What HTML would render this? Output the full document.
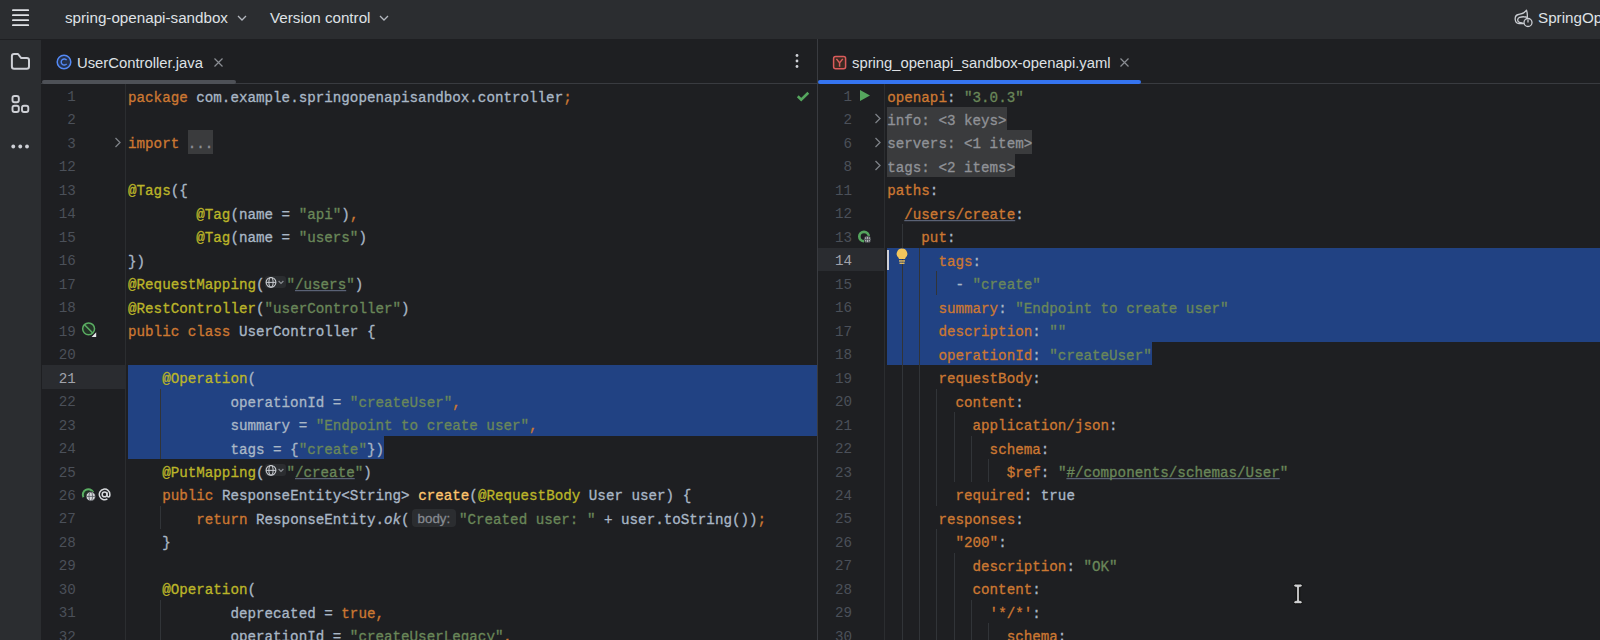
<!DOCTYPE html>
<html><head><meta charset="utf-8">
<style>
*{margin:0;padding:0;box-sizing:border-box}
html,body{width:1600px;height:640px;overflow:hidden;background:#1e1f22;position:relative}
body{font-family:"Liberation Sans",sans-serif}
.abs{position:absolute}
#title{position:absolute;left:0;top:0;width:1600px;height:39px;background:#2b2d30}
#strip{position:absolute;left:0;top:40px;width:41px;height:600px;background:#2b2d30}
.ttext{position:absolute;top:8.1px;font-size:15.2px;line-height:20px;color:#dfe1e5;white-space:nowrap}
.tabtext{position:absolute;top:52.6px;font-size:14.82px;line-height:20px;color:#dfe1e5;white-space:nowrap}
.hline{position:absolute;height:1px;background:#393b40}
.vline{position:absolute;width:1px;background:#393b40}
.ln{position:absolute;height:23.47px;line-height:23.5px;font-family:"Liberation Mono",monospace;font-size:14.233px;color:#4b5059;text-align:right;padding-top:2.5px}
.l-ln{left:41px;width:34.8px}
.r-ln{left:818px;width:34px}
.ln.cur{color:#a1a3ab}
.code{position:absolute;height:23.47px;line-height:23.5px;font-family:"Liberation Mono",monospace;font-size:14.233px;white-space:pre;padding-top:2.5px;-webkit-text-stroke:0.3px currentColor;transform:scaleY(1.07);transform-origin:0 17.2px}
.l-code{left:128px}
.r-code{left:887.2px}
.d{color:#a9b7c6}
.k{color:#cc7832}
.ku{color:#cc7832;text-decoration:underline;text-decoration-color:#646d82;text-underline-offset:1.4px;text-decoration-thickness:1.4px;text-decoration-skip-ink:none}
.s{color:#6a8759}
.su{color:#6a8759;text-decoration:underline;text-decoration-color:#646d82;text-underline-offset:1.4px;text-decoration-thickness:1.4px;text-decoration-skip-ink:none}
.a{color:#bbb529}
.m{color:#ffc66d}
.i{color:#a9b7c6;font-style:italic}
.fold{display:inline-block;vertical-align:top;position:relative;top:-2.5px;height:23.5px;padding-top:2.5px;color:#8c8f94;background:#3a3b3d;transform:scaleY(0.93458);transform-origin:0 17.2px}
.fold2{color:#909297}
.inlay-globe{display:inline-block;width:21.9px;height:12px;vertical-align:top;position:relative;top:2.9px;background:#2b2d30;border-radius:3px;transform:scaleY(0.93458);transform-origin:0 11.8px}
.inlay-globe svg{display:block}
.inlay-body{display:inline-block;width:43.9px;height:18.3px;margin:0 3.1px 0 2.3px;vertical-align:top;font-family:"Liberation Sans",sans-serif;font-size:13.3px;line-height:19.6px;color:#868a91;background:#2b2d30;border-radius:4px;text-indent:5.7px;transform:scaleY(0.93458);transform-origin:0 14.7px}
.guide{position:absolute;width:1px;background:#313438}
.sel{position:absolute;background:#214283}
.curgut{position:absolute;background:#2a2c30}
.foldbg{position:absolute;background:#3a3b3d}
</style></head><body>
<div id="title"></div>
<!-- hamburger -->
<svg class="abs" style="left:11px;top:9px" width="19" height="18" viewBox="0 0 19 18">
<g stroke="#dfe1e5" stroke-width="1.8" stroke-linecap="round"><line x1="1.9" y1="1.2" x2="17.2" y2="1.2"/><line x1="1.9" y1="6.2" x2="17.2" y2="6.2"/><line x1="1.9" y1="11.2" x2="17.2" y2="11.2"/><line x1="1.9" y1="16.2" x2="17.2" y2="16.2"/></g></svg>
<div class="ttext" style="left:65px">spring-openapi-sandbox</div>
<svg class="abs" style="left:237px;top:14.5px" width="10" height="7" viewBox="0 0 10 7"><path d="M1 1 L5 5 L9 1" fill="none" stroke="#b4b8bf" stroke-width="1.3"/></svg>
<div class="ttext" style="left:270px">Version control</div>
<svg class="abs" style="left:379px;top:14.5px" width="10" height="7" viewBox="0 0 10 7"><path d="M1 1 L5 5 L9 1" fill="none" stroke="#b4b8bf" stroke-width="1.3"/></svg>
<!-- spring icon -->
<svg class="abs" style="left:1514px;top:9px" width="20" height="19" viewBox="0 0 20 19">
<path d="M12.5 1.2 C10.5 4.5 7 5 4.5 5.5 C2 6 1 8 1.2 10.5 C1.5 13 3 14.5 5 14.6 L9.5 14.5 C8 13.8 5 13.6 4.3 12.6 C3.3 11.3 3.6 9 5.5 8.3 C8 7.6 11.5 7.8 13.3 8.5 C13.5 6 13.3 3.5 12.5 1.2 Z" fill="none" stroke="#c9ccd1" stroke-width="1.3" stroke-linejoin="round"/>
<circle cx="14" cy="13.5" r="4" fill="#2b2d30" stroke="#c9ccd1" stroke-width="1.3"/><line x1="14" y1="10.5" x2="14" y2="13.5" stroke="#c9ccd1" stroke-width="1.3"/></svg>
<div class="ttext" style="left:1538px">SpringOpenApiSandbox</div>

<div id="strip"></div>
<!-- folder icon -->
<svg class="abs" style="left:10px;top:52px" width="22" height="19" viewBox="0 0 22 19">
<path d="M1.9 4.2 Q1.9 2 4.1 2 L8 2 L11 5.9 L16.8 5.9 Q19 5.9 19 8.1 L19 14.6 Q19 16.8 16.8 16.8 L4.1 16.8 Q1.9 16.8 1.9 14.6 Z" fill="none" stroke="#ced0d6" stroke-width="2" stroke-linejoin="round"/></svg>
<!-- structure icon -->
<svg class="abs" style="left:10px;top:94px" width="22" height="20" viewBox="0 0 22 20">
<g fill="none" stroke="#ced0d6" stroke-width="1.9"><rect x="2.5" y="2" width="6.3" height="6.3" rx="2"/><rect x="2.5" y="11.7" width="6.3" height="6.3" rx="2"/><rect x="12" y="11.7" width="6.3" height="6.3" rx="2"/></g></svg>
<!-- more icon -->
<svg class="abs" style="left:10px;top:143px" width="22" height="7" viewBox="0 0 22 7">
<g fill="#ced0d6"><circle cx="3.25" cy="3.5" r="1.9"/><circle cx="10.25" cy="3.5" r="1.9"/><circle cx="17" cy="3.5" r="1.9"/></g></svg>

<!-- tab bars -->
<div class="hline" style="left:41px;top:83px;width:1559px"></div>
<div class="vline" style="left:817px;top:39px;height:601px"></div>
<!-- left tab -->
<svg class="abs" style="left:56px;top:54px" width="16" height="16" viewBox="0 0 16 16">
<circle cx="8" cy="8" r="6.8" fill="#25324d" stroke="#548af7" stroke-width="1.5"/>
<path d="M10.6 6.2 A3 3 0 1 0 10.6 9.8" fill="none" stroke="#548af7" stroke-width="1.4"/></svg>
<div class="tabtext" style="left:77px">UserController.java</div>
<svg class="abs" style="left:213px;top:57px" width="11" height="11" viewBox="0 0 11 11"><path d="M1.5 1.5 L9.5 9.5 M9.5 1.5 L1.5 9.5" stroke="#8a8d93" stroke-width="1.2"/></svg>
<div class="abs" style="left:42px;top:80px;width:194px;height:4px;background:#4e5157;border-radius:2px"></div>
<svg class="abs" style="left:793.8px;top:53.2px" width="6" height="16" viewBox="0 0 6 16"><g fill="#ced0d6"><circle cx="3" cy="2.5" r="1.4"/><circle cx="3" cy="8" r="1.4"/><circle cx="3" cy="13.5" r="1.4"/></g></svg>
<!-- right tab -->
<svg class="abs" style="left:832px;top:55px" width="15" height="15" viewBox="0 0 15 15">
<rect x="1.6" y="1.6" width="12" height="12.2" rx="2" fill="#3a2a22" stroke="#db5c5c" stroke-width="1.5"/>
<path d="M4.4 3.9 L7.6 7.9 L10.8 3.9 M7.6 7.9 L7.6 11.7" fill="none" stroke="#db5c5c" stroke-width="1.5"/></svg>
<div class="tabtext" style="left:852px">spring_openapi_sandbox-openapi.yaml</div>
<svg class="abs" style="left:1119px;top:57.3px" width="11" height="11" viewBox="0 0 11 11"><path d="M1.5 1.5 L9.5 9.5 M9.5 1.5 L1.5 9.5" stroke="#8a8d93" stroke-width="1.2"/></svg>
<div class="abs" style="left:818px;top:80px;width:323px;height:4px;background:#3574f0;border-radius:2px"></div>

<!-- gutter separators -->
<div class="vline" style="left:125px;top:84px;height:556px;background:#2b2d30"></div>
<div class="vline" style="left:884px;top:84px;height:556px;background:#2b2d30"></div>

<!-- left current line + selection -->
<div class="curgut" style="left:42px;top:365.14px;width:83px;height:23.47px"></div>
<div class="sel" style="left:128px;top:365.14px;width:689px;height:70.41px"></div>
<div class="sel" style="left:128px;top:435.55px;width:256.2px;height:23.47px"></div>
<!-- right current line + selection -->
<div class="curgut" style="left:818px;top:247.79px;width:66px;height:23.47px"></div>
<div class="sel" style="left:887.2px;top:247.79px;width:712.8px;height:93.88px"></div>
<div class="sel" style="left:887.2px;top:341.67px;width:264.8px;height:23.47px"></div>
<!-- folded bgs -->
<div class="foldbg" style="left:887.2px;top:106.97px;width:119.6px;height:23.47px"></div>
<div class="foldbg" style="left:887.2px;top:130.44px;width:145.2px;height:23.47px"></div>
<div class="foldbg" style="left:887.2px;top:153.91px;width:128.1px;height:23.47px"></div>

<div class="guide" style="left:160.2px;top:388.61px;height:70.41px"></div>
<div class="guide" style="left:160.2px;top:505.96px;height:23.47px"></div>
<div class="guide" style="left:160.2px;top:599.84px;height:46.94px"></div>
<div class="guide" style="left:902.3px;top:224.32px;height:422.46px"></div>
<div class="guide" style="left:919.4px;top:247.79px;height:398.99px"></div>
<div class="guide" style="left:936.4px;top:271.26px;height:23.47px"></div>
<div class="guide" style="left:936.4px;top:388.61px;height:117.35px"></div>
<div class="guide" style="left:953.5px;top:412.08px;height:70.41px"></div>
<div class="guide" style="left:970.6px;top:435.55px;height:46.94px"></div>
<div class="guide" style="left:987.7px;top:459.02px;height:23.47px"></div>
<div class="guide" style="left:936.4px;top:529.43px;height:117.35px"></div>
<div class="guide" style="left:953.5px;top:552.90px;height:93.88px"></div>
<div class="guide" style="left:970.6px;top:599.84px;height:46.94px"></div>
<div class="guide" style="left:987.7px;top:623.31px;height:23.47px"></div>
<div class="ln l-ln" style="top:83.50px">1</div>
<div class="code l-code" style="top:83.50px"><span class="k">package</span><span class="d"> com.example.springopenapisandbox.controller</span><span class="k">;</span></div>
<div class="ln l-ln" style="top:106.97px">2</div>
<div class="code l-code" style="top:106.97px"></div>
<div class="ln l-ln" style="top:130.44px">3</div>
<div class="code l-code" style="top:130.44px"><span class="k">import</span><span class="d"> </span><span class="fold">...</span></div>
<div class="ln l-ln" style="top:153.91px">12</div>
<div class="code l-code" style="top:153.91px"></div>
<div class="ln l-ln" style="top:177.38px">13</div>
<div class="code l-code" style="top:177.38px"><span class="a">@Tags</span><span class="d">({</span></div>
<div class="ln l-ln" style="top:200.85px">14</div>
<div class="code l-code" style="top:200.85px"><span class="d">        </span><span class="a">@Tag</span><span class="d">(name = </span><span class="s">"api"</span><span class="d">)</span><span class="k">,</span></div>
<div class="ln l-ln" style="top:224.32px">15</div>
<div class="code l-code" style="top:224.32px"><span class="d">        </span><span class="a">@Tag</span><span class="d">(name = </span><span class="s">"users"</span><span class="d">)</span></div>
<div class="ln l-ln" style="top:247.79px">16</div>
<div class="code l-code" style="top:247.79px"><span class="d">})</span></div>
<div class="ln l-ln" style="top:271.26px">17</div>
<div class="code l-code" style="top:271.26px"><span class="a">@RequestMapping</span><span class="d">(</span><span class="inlay-globe"><svg width="21" height="12" viewBox="0 0 21 12"><circle cx="6" cy="6.4" r="4.9" fill="none" stroke="#c9ccd1" stroke-width="1.1"/><ellipse cx="6" cy="6.4" rx="2.1" ry="4.9" fill="none" stroke="#c9ccd1" stroke-width="1"/><line x1="1.1" y1="6.4" x2="10.9" y2="6.4" stroke="#c9ccd1" stroke-width="1"/><path d="M13.6 5 L16 7.4 L18.4 5" fill="none" stroke="#8a8d93" stroke-width="1.2"/></svg></span><span class="s">"</span><span class="su">/users</span><span class="s">"</span><span class="d">)</span></div>
<div class="ln l-ln" style="top:294.73px">18</div>
<div class="code l-code" style="top:294.73px"><span class="a">@RestController</span><span class="d">(</span><span class="s">"userController"</span><span class="d">)</span></div>
<div class="ln l-ln" style="top:318.20px">19</div>
<div class="code l-code" style="top:318.20px"><span class="k">public class</span><span class="d"> UserController {</span></div>
<div class="ln l-ln" style="top:341.67px">20</div>
<div class="code l-code" style="top:341.67px"></div>
<div class="ln l-ln cur" style="top:365.14px">21</div>
<div class="code l-code" style="top:365.14px"><span class="d">    </span><span class="a">@Operation</span><span class="d">(</span></div>
<div class="ln l-ln" style="top:388.61px">22</div>
<div class="code l-code" style="top:388.61px"><span class="d">            operationId = </span><span class="s">"createUser"</span><span class="k">,</span></div>
<div class="ln l-ln" style="top:412.08px">23</div>
<div class="code l-code" style="top:412.08px"><span class="d">            summary = </span><span class="s">"Endpoint to create user"</span><span class="k">,</span></div>
<div class="ln l-ln" style="top:435.55px">24</div>
<div class="code l-code" style="top:435.55px"><span class="d">            tags = {</span><span class="s">"create"</span><span class="d">})</span></div>
<div class="ln l-ln" style="top:459.02px">25</div>
<div class="code l-code" style="top:459.02px"><span class="d">    </span><span class="a">@PutMapping</span><span class="d">(</span><span class="inlay-globe"><svg width="21" height="12" viewBox="0 0 21 12"><circle cx="6" cy="6.4" r="4.9" fill="none" stroke="#c9ccd1" stroke-width="1.1"/><ellipse cx="6" cy="6.4" rx="2.1" ry="4.9" fill="none" stroke="#c9ccd1" stroke-width="1"/><line x1="1.1" y1="6.4" x2="10.9" y2="6.4" stroke="#c9ccd1" stroke-width="1"/><path d="M13.6 5 L16 7.4 L18.4 5" fill="none" stroke="#8a8d93" stroke-width="1.2"/></svg></span><span class="s">"</span><span class="su">/create</span><span class="s">"</span><span class="d">)</span></div>
<div class="ln l-ln" style="top:482.49px">26</div>
<div class="code l-code" style="top:482.49px"><span class="d">    </span><span class="k">public</span><span class="d"> ResponseEntity&lt;String&gt; </span><span class="m">create</span><span class="d">(</span><span class="a">@RequestBody</span><span class="d"> User user) {</span></div>
<div class="ln l-ln" style="top:505.96px">27</div>
<div class="code l-code" style="top:505.96px"><span class="d">        </span><span class="k">return</span><span class="d"> ResponseEntity.</span><span class="i">ok</span><span class="d">(</span><span class="inlay-body">body:</span><span class="s">"Created user: "</span><span class="d"> + user.toString())</span><span class="k">;</span></div>
<div class="ln l-ln" style="top:529.43px">28</div>
<div class="code l-code" style="top:529.43px"><span class="d">    }</span></div>
<div class="ln l-ln" style="top:552.90px">29</div>
<div class="code l-code" style="top:552.90px"></div>
<div class="ln l-ln" style="top:576.37px">30</div>
<div class="code l-code" style="top:576.37px"><span class="d">    </span><span class="a">@Operation</span><span class="d">(</span></div>
<div class="ln l-ln" style="top:599.84px">31</div>
<div class="code l-code" style="top:599.84px"><span class="d">            deprecated = </span><span class="k">true</span><span class="k">,</span></div>
<div class="ln l-ln" style="top:623.31px">32</div>
<div class="code l-code" style="top:623.31px"><span class="d">            operationId = </span><span class="s">"createUserLegacy"</span><span class="k">,</span></div>
<div class="ln r-ln" style="top:83.50px">1</div>
<div class="code r-code" style="top:83.50px"><span class="k">openapi</span><span class="d">:</span><span class="d"> </span><span class="s">"3.0.3"</span></div>
<div class="ln r-ln" style="top:106.97px">2</div>
<div class="code r-code" style="top:106.97px"><span class="fold2">info: &lt;3 keys&gt;</span></div>
<div class="ln r-ln" style="top:130.44px">6</div>
<div class="code r-code" style="top:130.44px"><span class="fold2">servers: &lt;1 item&gt;</span></div>
<div class="ln r-ln" style="top:153.91px">8</div>
<div class="code r-code" style="top:153.91px"><span class="fold2">tags: &lt;2 items&gt;</span></div>
<div class="ln r-ln" style="top:177.38px">11</div>
<div class="code r-code" style="top:177.38px"><span class="k">paths</span><span class="d">:</span></div>
<div class="ln r-ln" style="top:200.85px">12</div>
<div class="code r-code" style="top:200.85px"><span class="d">  </span><span class="ku">/users/create</span><span class="d">:</span></div>
<div class="ln r-ln" style="top:224.32px">13</div>
<div class="code r-code" style="top:224.32px"><span class="d">    </span><span class="k">put</span><span class="d">:</span></div>
<div class="ln r-ln cur" style="top:247.79px">14</div>
<div class="code r-code" style="top:247.79px"><span class="d">      </span><span class="k">tags</span><span class="d">:</span></div>
<div class="ln r-ln" style="top:271.26px">15</div>
<div class="code r-code" style="top:271.26px"><span class="d">        - </span><span class="s">"create"</span></div>
<div class="ln r-ln" style="top:294.73px">16</div>
<div class="code r-code" style="top:294.73px"><span class="d">      </span><span class="k">summary</span><span class="d">: </span><span class="s">"Endpoint to create user"</span></div>
<div class="ln r-ln" style="top:318.20px">17</div>
<div class="code r-code" style="top:318.20px"><span class="d">      </span><span class="k">description</span><span class="d">: </span><span class="s">""</span></div>
<div class="ln r-ln" style="top:341.67px">18</div>
<div class="code r-code" style="top:341.67px"><span class="d">      </span><span class="k">operationId</span><span class="d">: </span><span class="s">"createUser"</span></div>
<div class="ln r-ln" style="top:365.14px">19</div>
<div class="code r-code" style="top:365.14px"><span class="d">      </span><span class="k">requestBody</span><span class="d">:</span></div>
<div class="ln r-ln" style="top:388.61px">20</div>
<div class="code r-code" style="top:388.61px"><span class="d">        </span><span class="k">content</span><span class="d">:</span></div>
<div class="ln r-ln" style="top:412.08px">21</div>
<div class="code r-code" style="top:412.08px"><span class="d">          </span><span class="k">application/json</span><span class="d">:</span></div>
<div class="ln r-ln" style="top:435.55px">22</div>
<div class="code r-code" style="top:435.55px"><span class="d">            </span><span class="k">schema</span><span class="d">:</span></div>
<div class="ln r-ln" style="top:459.02px">23</div>
<div class="code r-code" style="top:459.02px"><span class="d">              </span><span class="k">$ref</span><span class="d">: </span><span class="s">"</span><span class="su">#/components/schemas/User</span><span class="s">"</span></div>
<div class="ln r-ln" style="top:482.49px">24</div>
<div class="code r-code" style="top:482.49px"><span class="d">        </span><span class="k">required</span><span class="d">: true</span></div>
<div class="ln r-ln" style="top:505.96px">25</div>
<div class="code r-code" style="top:505.96px"><span class="d">      </span><span class="k">responses</span><span class="d">:</span></div>
<div class="ln r-ln" style="top:529.43px">26</div>
<div class="code r-code" style="top:529.43px"><span class="d">        </span><span class="k">"200"</span><span class="d">:</span></div>
<div class="ln r-ln" style="top:552.90px">27</div>
<div class="code r-code" style="top:552.90px"><span class="d">          </span><span class="k">description</span><span class="d">: </span><span class="s">"OK"</span></div>
<div class="ln r-ln" style="top:576.37px">28</div>
<div class="code r-code" style="top:576.37px"><span class="d">          </span><span class="k">content</span><span class="d">:</span></div>
<div class="ln r-ln" style="top:599.84px">29</div>
<div class="code r-code" style="top:599.84px"><span class="d">            </span><span class="k">'*/*'</span><span class="d">:</span></div>
<div class="ln r-ln" style="top:623.31px">30</div>
<div class="code r-code" style="top:623.31px"><span class="d">              </span><span class="k">schema</span><span class="d">:</span></div>

<!-- fold arrows -->
<svg class="abs" style="left:114px;top:137px" width="8" height="11" viewBox="0 0 8 11"><path d="M1.5 1 L6 5.5 L1.5 10" fill="none" stroke="#7d8187" stroke-width="1.3"/></svg>
<svg class="abs" style="left:873.8px;top:113px" width="8" height="11" viewBox="0 0 8 11"><path d="M1.5 1 L6 5.5 L1.5 10" fill="none" stroke="#7d8187" stroke-width="1.3"/></svg>
<svg class="abs" style="left:873.8px;top:136.5px" width="8" height="11" viewBox="0 0 8 11"><path d="M1.5 1 L6 5.5 L1.5 10" fill="none" stroke="#7d8187" stroke-width="1.3"/></svg>
<svg class="abs" style="left:873.8px;top:160px" width="8" height="11" viewBox="0 0 8 11"><path d="M1.5 1 L6 5.5 L1.5 10" fill="none" stroke="#7d8187" stroke-width="1.3"/></svg>
<!-- check -->
<svg class="abs" style="left:796px;top:90px" width="14" height="12" viewBox="0 0 14 12"><path d="M1.8 6.3 L5.2 9.6 L12.3 2.7" fill="none" stroke="#55a65e" stroke-width="2.6"/></svg>
<!-- play -->
<svg class="abs" style="left:859px;top:89px" width="12" height="13" viewBox="0 0 12 13"><path d="M1 1 L11 6.5 L1 12 Z" fill="#55a65e"/></svg>
<!-- bean icon line 19 -->
<svg class="abs" style="left:81px;top:321px" width="17" height="17" viewBox="0 0 17 17">
<circle cx="7.6" cy="7.85" r="5.95" fill="#233427" stroke="#5aad62" stroke-width="1.5"/><line x1="3.5" y1="3.7" x2="11.7" y2="12" stroke="#5aad62" stroke-width="1.5"/><path d="M15.2 11.3 L15.2 16 L10.6 16 Z" fill="#e6e7ea"/></svg>
<!-- line 26 icons -->
<svg class="abs" style="left:81px;top:486.5px" width="16" height="16" viewBox="0 0 16 16">
<path d="M2.4 10.3 A5.5 5.5 0 1 1 12.2 5.2" fill="#1f3324" stroke="#5aad62" stroke-width="2"/>
<circle cx="9.75" cy="9.4" r="4.7" fill="#d7d9dc" stroke="#1e1f22" stroke-width="0.8"/><g stroke="#55585e" stroke-width="0.8" fill="none"><line x1="5.2" y1="9.4" x2="14.3" y2="9.4"/><ellipse cx="9.75" cy="9.4" rx="1.8" ry="4.4"/></g></svg>
<svg class="abs" style="left:98px;top:487.5px" width="13" height="13" viewBox="0 0 13 13">
<circle cx="6.6" cy="6.4" r="2.4" fill="none" stroke="#d7d9dc" stroke-width="1.5"/><path d="M9 4.2 L9 7.3 Q9 8.9 10.4 8.9 Q11.9 8.9 11.9 6.4 A5.3 5.3 0 1 0 9.4 10.9" fill="none" stroke="#d7d9dc" stroke-width="1.5"/></svg>
<!-- right line 13 icon -->
<svg class="abs" style="left:857px;top:230px" width="16" height="16" viewBox="0 0 16 16">
<path d="M7 11.2 A4.7 4.7 0 1 1 11.7 6.5" fill="none" stroke="#55a65e" stroke-width="2.7"/>
<circle cx="10.5" cy="9.4" r="3.4" fill="#b4b7bc" stroke="#1e1f22" stroke-width="0.7"/><g stroke="#3c3f44" stroke-width="0.7" fill="none"><line x1="7.3" y1="9.4" x2="13.7" y2="9.4"/><ellipse cx="10.5" cy="9.4" rx="1.3" ry="3.1"/></g></svg>
<!-- caret + bulb -->
<div class="abs" style="left:887px;top:250px;width:2px;height:20px;background:#ced0d6"></div>
<svg class="abs" style="left:896px;top:248px" width="12" height="17" viewBox="0 0 12 17">
<path d="M6 0.5 A5.3 5.3 0 0 1 9.5 9.8 L9 11 L3 11 L2.5 9.8 A5.3 5.3 0 0 1 6 0.5 Z" fill="#f2c55c"/><rect x="3" y="12.3" width="6" height="1.3" fill="#f2c55c"/><rect x="3.5" y="14.6" width="5" height="1.3" fill="#f2c55c"/></svg>
<!-- ibeam cursor -->
<svg class="abs" style="left:1292px;top:582px" width="12" height="24" viewBox="0 0 12 24">
<path d="M3.3 2 L8.7 2 Q10.3 2 10.3 3.6 Q10.3 5.2 8.7 5.2 L7.6 5.2 L7.6 18.6 L8.7 18.6 Q10.3 18.6 10.3 20.2 Q10.3 21.8 8.7 21.8 L3.3 21.8 Q1.7 21.8 1.7 20.2 Q1.7 18.6 3.3 18.6 L4.4 18.6 L4.4 5.2 L3.3 5.2 Q1.7 5.2 1.7 3.6 Q1.7 2 3.3 2 Z" fill="#cfd0d2" stroke="#0a0a0a" stroke-width="1"/>
<line x1="6" y1="5.5" x2="6" y2="18.3" stroke="#9a9a9a" stroke-width="0.7"/></svg>
</body></html>
